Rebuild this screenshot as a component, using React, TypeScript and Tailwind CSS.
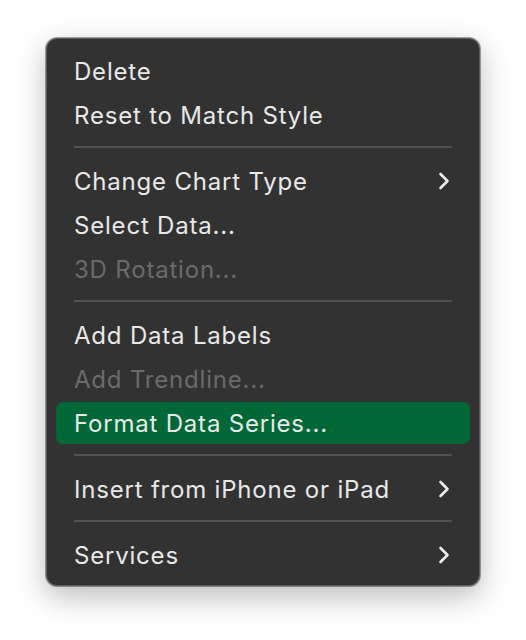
import React from 'react';

type Item =
  | { kind: 'item'; label: string; disabled?: boolean; submenu?: boolean; active?: boolean }
  | { kind: 'sep' };

const items: Item[] = [
  { kind: 'item', label: 'Delete' },
  { kind: 'item', label: 'Reset to Match Style' },
  { kind: 'sep' },
  { kind: 'item', label: 'Change Chart Type', submenu: true },
  { kind: 'item', label: 'Select Data...' },
  { kind: 'item', label: '3D Rotation...', disabled: true },
  { kind: 'sep' },
  { kind: 'item', label: 'Add Data Labels' },
  { kind: 'item', label: 'Add Trendline...', disabled: true },
  { kind: 'item', label: 'Format Data Series...', active: true },
  { kind: 'sep' },
  { kind: 'item', label: 'Insert from iPhone or iPad', submenu: true },
  { kind: 'sep' },
  { kind: 'item', label: 'Services', submenu: true },
];

function Chevron() {
  return (
    <svg width="12" height="18" viewBox="0 0 12 18" className="text-[#ececec]">
      <path d="M2.5 2 L9.5 9 L2.5 16" fill="none" stroke="currentColor" strokeWidth="2.6" strokeLinecap="round" strokeLinejoin="round" />
    </svg>
  );
}

export default function App() {
  return (
    <div className="w-[526px] h-[640px] bg-white pt-[38px] pl-[46px]" style={{ fontFamily: 'Inter, "Noto Sans", sans-serif' }}>
      <div className="w-[434px] rounded-[11px] border border-[#5a5a5a] bg-[#323232] pt-[10px] pb-[8px] shadow-[0_0_0_1px_rgba(0,0,0,0.35),0_10px_30px_rgba(0,0,0,0.28)]">
        {items.map((it, i) =>
          it.kind === 'sep' ? (
            <div key={i} className="pt-[9px] pb-[11px] px-[27px]">
              <div className="h-[2px] bg-[#525252]" />
            </div>
          ) : (
            <div key={i} className="h-[44px] px-[9px] flex items-center">
              <div
                className={`flex-1 h-[42px] rounded-[7px] flex items-center justify-between pl-[18px] pr-[20px] text-[24px] tracking-[0.8px] ${
                  it.active ? 'bg-[#006837]' : ''
                } ${it.disabled ? 'text-[#6b6b6b]' : 'text-[#e8e8e8]'}`}
              >
                <span className="pt-[2px]">{it.label}</span>
                {it.submenu && <Chevron />}
              </div>
            </div>
          )
        )}
      </div>
    </div>
  );
}
